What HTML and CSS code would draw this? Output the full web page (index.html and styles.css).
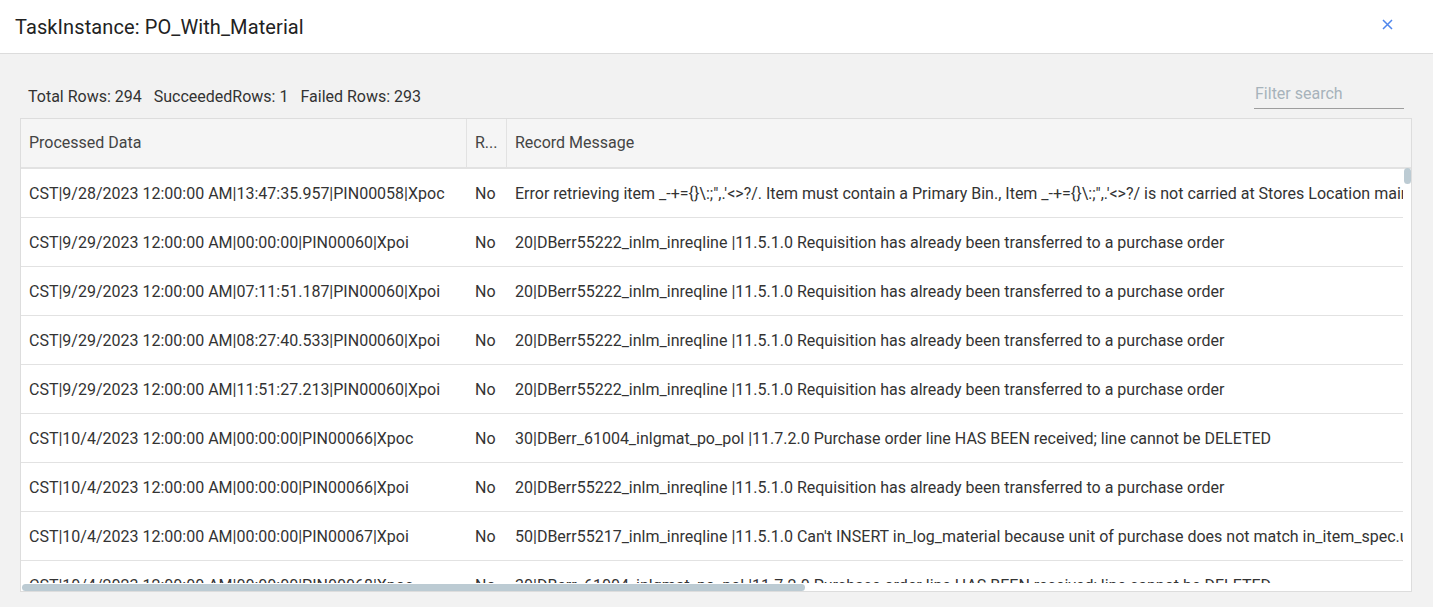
FILE: index.html
```html
<!DOCTYPE html>
<html>
<head>
<meta charset="utf-8">
<link rel="stylesheet" href="styles.css">
</head>
<body>
<div class="dialog">
  <div class="dlg-header">
    <div class="dlg-title">TaskInstance: PO_With_Material</div>
    <button class="close" aria-label="close">
      <svg width="11" height="11" viewBox="0 0 11 11"><path d="M1 1L10 10M10 1L1 10" stroke="#4f86ec" stroke-width="1.5" fill="none"/></svg>
    </button>
  </div>
  <div class="dlg-body">
    <div class="toolbar">
      <div class="stats"><span>Total Rows: 294</span><span>SucceededRows: 1</span><span>Failed Rows: 293</span></div>
      <input class="filter" type="text" placeholder="Filter search">
    </div>
    <div class="grid">
      <div class="grid-head">
        <div class="hcell">Processed Data</div>
        <div class="hcell">R...</div>
        <div class="hcell">Record Message</div>
      </div>
      <div class="grid-main">
        <div class="rows">
          <div class="row"><div class="cell">CST|9/28/2023 12:00:00 AM|13:47:35.957|PIN00058|Xpoc</div><div class="cell">No</div><div class="cell">Error retrieving item _-+={}\:;",.'&lt;&gt;?/. Item must contain a Primary Bin., Item _-+={}\:;",.'&lt;&gt;?/ is not carried at Stores Location main warehouse</div></div>
          <div class="row"><div class="cell">CST|9/29/2023 12:00:00 AM|00:00:00|PIN00060|Xpoi</div><div class="cell">No</div><div class="cell">20|DBerr55222_inlm_inreqline |11.5.1.0 Requisition has already been transferred to a purchase order</div></div>
          <div class="row"><div class="cell">CST|9/29/2023 12:00:00 AM|07:11:51.187|PIN00060|Xpoi</div><div class="cell">No</div><div class="cell">20|DBerr55222_inlm_inreqline |11.5.1.0 Requisition has already been transferred to a purchase order</div></div>
          <div class="row"><div class="cell">CST|9/29/2023 12:00:00 AM|08:27:40.533|PIN00060|Xpoi</div><div class="cell">No</div><div class="cell">20|DBerr55222_inlm_inreqline |11.5.1.0 Requisition has already been transferred to a purchase order</div></div>
          <div class="row"><div class="cell">CST|9/29/2023 12:00:00 AM|11:51:27.213|PIN00060|Xpoi</div><div class="cell">No</div><div class="cell">20|DBerr55222_inlm_inreqline |11.5.1.0 Requisition has already been transferred to a purchase order</div></div>
          <div class="row"><div class="cell">CST|10/4/2023 12:00:00 AM|00:00:00|PIN00066|Xpoc</div><div class="cell">No</div><div class="cell">30|DBerr_61004_inlgmat_po_pol |11.7.2.0 Purchase order line HAS BEEN received; line cannot be DELETED</div></div>
          <div class="row"><div class="cell">CST|10/4/2023 12:00:00 AM|00:00:00|PIN00066|Xpoi</div><div class="cell">No</div><div class="cell">20|DBerr55222_inlm_inreqline |11.5.1.0 Requisition has already been transferred to a purchase order</div></div>
          <div class="row"><div class="cell">CST|10/4/2023 12:00:00 AM|00:00:00|PIN00067|Xpoi</div><div class="cell">No</div><div class="cell">50|DBerr55217_inlm_inreqline |11.5.1.0 Can't INSERT in_log_material because unit of purchase does not match in_item_spec.uom</div></div>
          <div class="row"><div class="cell">CST|10/4/2023 12:00:00 AM|00:00:00|PIN00068|Xpoc</div><div class="cell">No</div><div class="cell">30|DBerr_61004_inlgmat_po_pol |11.7.2.0 Purchase order line HAS BEEN received; line cannot be DELETED</div></div>
        </div>
        <div class="vscroll"><div class="vthumb"></div></div>
      </div>
      <div class="hscroll"><div class="hthumb"></div></div>
    </div>
  </div>
</div>
</body>
</html>
```
FILE: styles.css
```css
* { box-sizing: border-box; }
html, body { margin: 0; padding: 0; }
body {
  width: 1433px;
  height: 607px;
  overflow: hidden;
  font-family: Roboto, "Liberation Sans", sans-serif;
  color: #333;
  background: #f2f2f2;
}
.dialog { display: flex; flex-direction: column; height: 607px; }
.dlg-header {
  flex: none;
  height: 54px;
  background: #fff;
  border-bottom: 1px solid #dcdcdc;
  display: flex;
  align-items: center;
  justify-content: space-between;
  padding: 0 40px 0 15px;
}
.dlg-title { font-size: 20px; letter-spacing: 0.1px; color: #222; padding-bottom: 0; }
.close {
  border: 0;
  background: transparent;
  padding: 0;
  width: 11px;
  height: 11px;
  display: flex;
  margin-bottom: 5px;
}
.dlg-body {
  flex: 1;
  min-height: 0;
  display: flex;
  flex-direction: column;
  padding: 0 21px 15px 20px;
}
.toolbar {
  flex: none;
  height: 64px;
  display: flex;
  align-items: flex-end;
  justify-content: space-between;
  padding: 0 8px 9px 8px;
}
.stats { font-size: 16px; color: #333; display: flex; gap: 12px; padding-bottom: 3px; }
.filter {
  width: 150px;
  height: 26px;
  border: 0;
  border-bottom: 1px solid #9e9e9e;
  background: transparent;
  font-family: inherit;
  font-size: 16px;
  padding: 0 1px 4px;
  outline: none;
  color: #333;
}
.filter::placeholder { color: #a7b3bb; }
.grid {
  flex: 1;
  display: flex;
  flex-direction: column;
  background: #fff;
  border: 1px solid #dddddd;
  min-height: 0;
}
.grid-head {
  flex: none;
  height: 50px;
  display: grid;
  grid-template-columns: 446px 40px 1fr;
  background: #f5f5f5;
  border-bottom: 2px solid #e2e2e2;
  font-size: 16px;
  color: #444;
}
.hcell {
  display: flex;
  align-items: center;
  padding: 0 0 1px 8px;
  border-right: 1px solid #e2e2e2;
  white-space: nowrap;
  overflow: hidden;
}
.hcell:last-child { border-right: 0; }
.grid-main { flex: 1; display: flex; min-height: 0; }
.rows { flex: 1; overflow: hidden; }
.row {
  height: 49px;
  display: grid;
  grid-template-columns: 446px 40px 1fr;
  border-bottom: 1px solid #e2e2e2;
  font-size: 16px;
}
.cell {
  display: flex;
  align-items: center;
  padding-left: 8px;
  white-space: nowrap;
  overflow: hidden;
}
.vscroll { width: 8px; background: #fff; }
.vthumb { width: 7px; height: 16px; margin-left: 1px; margin-top: -1px; background: #bccbd3; border-radius: 4px; }
.hscroll { height: 8px; flex: none; background: #fff; padding: 1px 0 0 1px; }
.hthumb { width: 783px; height: 7px; background: #bccbd3; border-radius: 4px; }
```
